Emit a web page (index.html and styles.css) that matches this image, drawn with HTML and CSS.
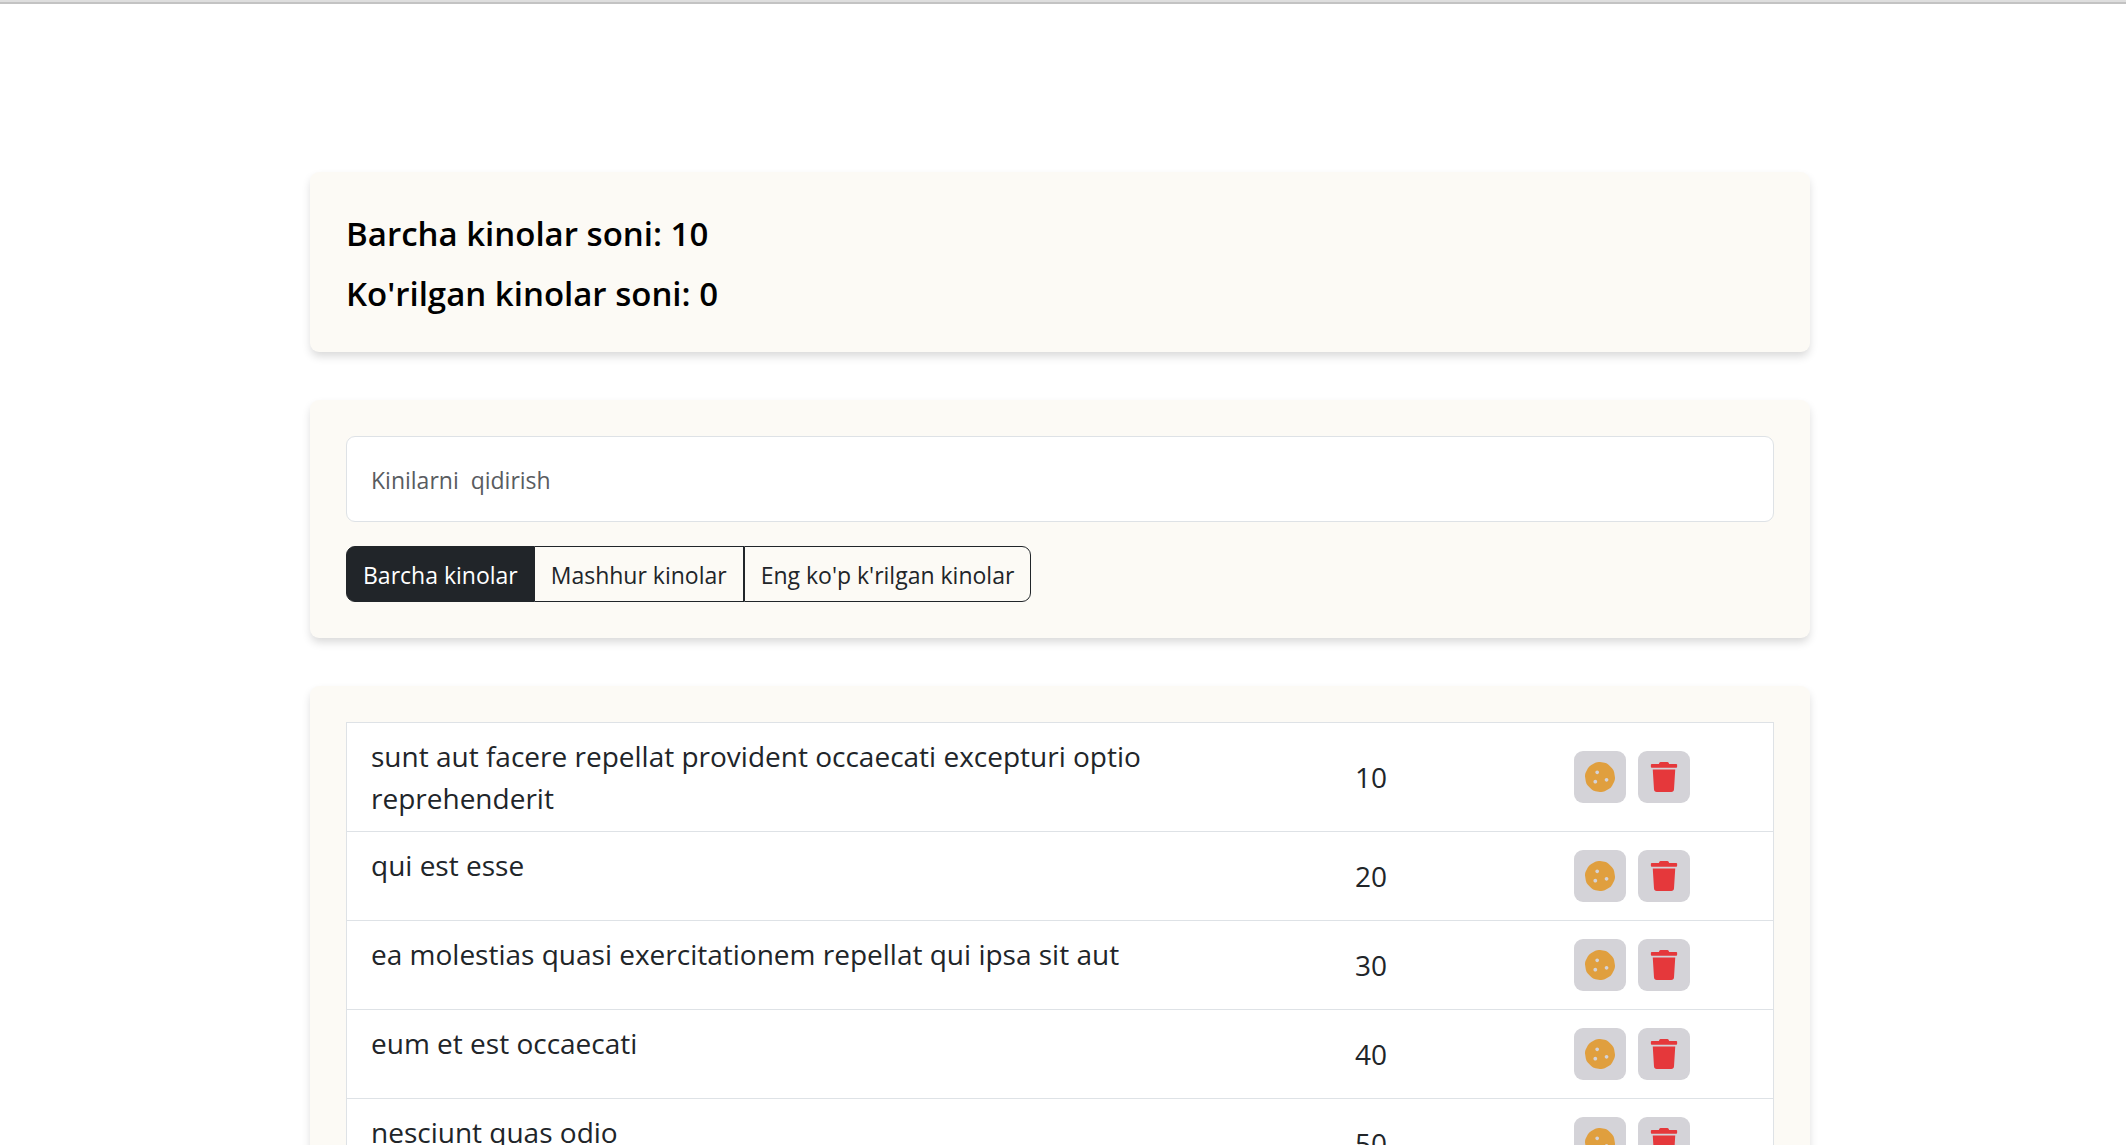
FILE: index.html
```html
<!DOCTYPE html>
<html lang="uz">
<head>
  <meta charset="utf-8">
  <meta name="viewport" content="width=device-width, initial-scale=1">
  <title>Kinolar</title>
  <link rel="stylesheet" href="styles.css">
</head>
<body>
  <svg class="sprite" aria-hidden="true">
    <symbol id="cookie" viewBox="0 0 512 512"><path d="M510.37 254.79l-12.08-76.26a132.493 132.493 0 0 0-37.16-72.95l-54.76-54.75c-19.73-19.72-45.18-32.7-72.71-37.05l-76.7-12.15c-27.51-4.36-55.69.11-80.52 12.76L107.32 49.6a132.25 132.25 0 0 0-57.79 57.8l-35.1 68.88a132.602 132.602 0 0 0-12.82 80.94l12.08 76.27a132.493 132.493 0 0 0 37.16 72.95l54.76 54.75a132.087 132.087 0 0 0 72.71 37.05l76.7 12.14c27.51 4.36 55.69-.11 80.52-12.75l69.12-35.21a132.302 132.302 0 0 0 57.79-57.8l35.1-68.87c12.71-24.96 17.2-53.3 12.82-80.96zM176 368c-17.67 0-32-14.33-32-32s14.33-32 32-32 32 14.33 32 32-14.33 32-32 32zm32-160c-17.67 0-32-14.33-32-32s14.33-32 32-32 32 14.33 32 32-14.33 32-32 32zm160 128c-17.67 0-32-14.33-32-32s14.33-32 32-32 32 14.33 32 32-14.33 32-32 32z"/></symbol>
    <symbol id="trash" viewBox="0 0 448 512"><path d="M432 32H312l-9.4-18.7A24 24 0 0 0 281.1 0H166.8a23.72 23.72 0 0 0-21.4 13.3L136 32H16A16 16 0 0 0 0 48v32a16 16 0 0 0 16 16h416a16 16 0 0 0 16-16V48a16 16 0 0 0-16-16zM53.2 467a48 48 0 0 0 47.9 45h245.8a48 48 0 0 0 47.9-45L416 128H32z"/></symbol>
  </svg>

  <main class="app">
    <section class="card app-info">
      <h1 class="info-line">Barcha kinolar soni: 10</h1>
      <h2 class="info-line">Ko'rilgan kinolar soni: 0</h2>
    </section>

    <section class="card search-panel">
      <input class="search-input" type="text" placeholder="Kinilarni  qidirish" aria-label="Kinilarni qidirish">
      <div class="btn-group">
        <button class="btn btn-active" type="button">Barcha kinolar</button>
        <button class="btn" type="button">Mashhur kinolar</button>
        <button class="btn" type="button">Eng ko'p k'rilgan kinolar</button>
      </div>
    </section>

    <section class="card">
      <ul class="movie-list">
        <li class="movie">
          <span class="movie-title">sunt aut facere repellat provident occaecati excepturi optio reprehenderit</span>
          <input class="movie-views" type="text" value="10" aria-label="Ko'rishlar soni">
          <div class="movie-actions">
            <button class="icon-btn cookie" type="button" aria-label="Cookie"><svg><use href="#cookie"/></svg></button>
            <button class="icon-btn trash" type="button" aria-label="Trash"><svg><use href="#trash"/></svg></button>
          </div>
        </li>
        <li class="movie">
          <span class="movie-title">qui est esse</span>
          <input class="movie-views" type="text" value="20" aria-label="Ko'rishlar soni">
          <div class="movie-actions">
            <button class="icon-btn cookie" type="button" aria-label="Cookie"><svg><use href="#cookie"/></svg></button>
            <button class="icon-btn trash" type="button" aria-label="Trash"><svg><use href="#trash"/></svg></button>
          </div>
        </li>
        <li class="movie">
          <span class="movie-title">ea molestias quasi exercitationem repellat qui ipsa sit aut</span>
          <input class="movie-views" type="text" value="30" aria-label="Ko'rishlar soni">
          <div class="movie-actions">
            <button class="icon-btn cookie" type="button" aria-label="Cookie"><svg><use href="#cookie"/></svg></button>
            <button class="icon-btn trash" type="button" aria-label="Trash"><svg><use href="#trash"/></svg></button>
          </div>
        </li>
        <li class="movie">
          <span class="movie-title">eum et est occaecati</span>
          <input class="movie-views" type="text" value="40" aria-label="Ko'rishlar soni">
          <div class="movie-actions">
            <button class="icon-btn cookie" type="button" aria-label="Cookie"><svg><use href="#cookie"/></svg></button>
            <button class="icon-btn trash" type="button" aria-label="Trash"><svg><use href="#trash"/></svg></button>
          </div>
        </li>
        <li class="movie">
          <span class="movie-title">nesciunt quas odio</span>
          <input class="movie-views" type="text" value="50" aria-label="Ko'rishlar soni">
          <div class="movie-actions">
            <button class="icon-btn cookie" type="button" aria-label="Cookie"><svg><use href="#cookie"/></svg></button>
            <button class="icon-btn trash" type="button" aria-label="Trash"><svg><use href="#trash"/></svg></button>
          </div>
        </li>
      </ul>
    </section>
  </main>
</body>
</html>
```
FILE: styles.css
```css
* {
  box-sizing: border-box;
}

body {
  margin: 0;
  border-top: 2px solid #dedede;
  background: #fff;
  color: #212529;
  font-family: "Segoe UI", "Open Sans", "Noto Sans", sans-serif;
  font-size: 23px;
  line-height: 36px;
}

.sprite {
  display: none;
}

.app {
  display: flex;
  flex-direction: column;
  align-items: center;
  gap: 48px;
  padding: 168px 6px 48px 0;
  border-top: 2px solid #c3c3c3;
}

.card {
  width: 100%;
  max-width: 1500px;
  padding: 36px;
  border-radius: 9px;
  background: #fcfaf5;
  box-shadow: 0 5px 10px -1px rgba(0, 0, 0, .16);
}

.app-info {
  display: flex;
  flex-direction: column;
  gap: 12px;
  padding: 38px 36px 34px;
  color: #000;
}

.info-line {
  margin: 0;
  font-size: 33px;
  font-weight: 600;
  line-height: 48px;
}

.search-panel {
  display: flex;
  flex-direction: column;
  align-items: flex-start;
  gap: 24px;
}

.search-input {
  width: 100%;
  height: 86px;
  padding: 2px 24px 0;
  border: 1px solid #dee2e6;
  border-radius: 9px;
  background: #fff;
  color: #212529;
  font: inherit;
}

.search-input::placeholder {
  color: #595c5f;
  opacity: 1;
  white-space: pre;
}

.btn-group {
  display: flex;
}

.btn {
  padding: 10px 16px 8px;
  border: 1px solid #212529;
  background: transparent;
  color: #212529;
  font: inherit;
}

.btn:first-child {
  border-radius: 9px 0 0 9px;
}

.btn:last-child {
  border-radius: 0 9px 9px 0;
}

.btn-active {
  background: #212529;
  color: #fff;
}

.btn-active + .btn {
  border-left: 0;
}

.movie-list {
  margin: 0;
  padding: 0;
  border: 1px solid #dee2e6;
  background: #fff;
  list-style: none;
}

.movie {
  display: grid;
  grid-template-columns: minmax(0, 1fr) 300px 116px;
  column-gap: 53px;
  align-items: center;
  min-height: 89px;
  padding: 12px 83px 12px 24px;
}

.movie + .movie {
  border-top: 1px solid #dee2e6;
}

.movie-title {
  align-self: start;
  font-size: 28px;
  line-height: 42px;
}

.movie-views {
  width: 100%;
  padding: 0;
  border: 0;
  background: transparent;
  color: #212529;
  font: inherit;
  font-size: 28px;
  line-height: 42px;
  text-align: center;
}

.movie-actions {
  display: flex;
  gap: 12px;
}

.icon-btn {
  display: flex;
  align-items: center;
  justify-content: center;
  width: 52px;
  height: 52px;
  padding: 0;
  border: 0;
  border-radius: 9px;
  background: #d4d3d8;
}

.icon-btn svg {
  width: 30px;
  height: 30px;
  fill: currentColor;
}

.cookie {
  color: #e09f3e;
}

.trash {
  color: #e5383b;
}
```
